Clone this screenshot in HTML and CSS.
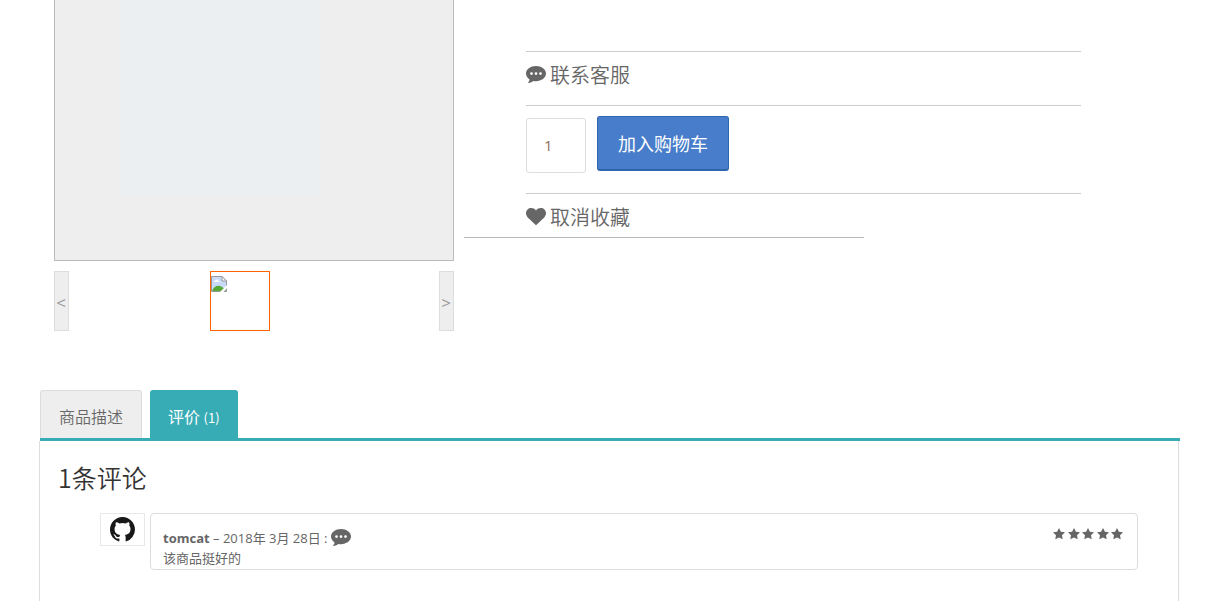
FILE: index.html
```html
<!DOCTYPE html>
<html lang="zh-CN">
<head>
<meta charset="utf-8">
<title>商品详情</title>
<link rel="stylesheet" href="styles.css">
</head>
<body>
<svg class="defs" width="0" height="0" aria-hidden="true">
  <symbol id="bubble" viewBox="0 0 20 18">
    <path fill-rule="evenodd" d="M10 0C4.500 0 0 3.300 0 7.600c0 2.500 1.400 4.500 3.600 5.900-.2 1.400-1 2.500-2 3.500 2.400-.2 4.300-.8 5.800-2.100.8.200 1.700.3 2.600.3 5.500 0 10-3.300 10-7.600S15.500 0 10 0zM5.500 6.200a1.400 1.400 0 1 1 0 2.800 1.400 1.400 0 0 1 0-2.800zm4.500 0a1.400 1.400 0 1 1 0 2.800 1.400 1.400 0 0 1 0-2.800zm4.500 0a1.400 1.400 0 1 1 0 2.800 1.400 1.400 0 0 1 0-2.800z"/>
  </symbol>
  <symbol id="star" viewBox="0 0 12 12">
    <path d="M6 0l1.900 3.700 4.100.6-3 2.900.7 4.100L6 9.400l-3.700 1.900.7-4.100L0 4.300l4.100-.6z"/>
  </symbol>
</svg>
<main class="page">
  <section class="product">
    <div class="gallery">
      <div class="preview"><div class="lens"></div></div>
      <div class="thumbs">
        <button class="arrow" type="button">&lt;</button>
        <div class="thumb">
          <svg width="16" height="16" viewBox="0 0 16 16" aria-hidden="true">
            <path d="M.5 15.500V.5h10.500l4.500 4.500v10.500z" fill="#c8daf7" stroke="#999"/>
            <path d="M11 .5V5h4.500z" fill="#fff" stroke="#999"/>
            <path d="M3 6c0-1.500 1.500-1.500 2-2 1-1 2 0 2 .7 1 0 1.500.5 1.500 1.300z" fill="#fff"/>
            <path d="M1 15c2-4 4-5.500 7-5.200 2 .2 5 2 7 5.200z" fill="#57a937"/>
            <path d="M8.500 16.500L16.500 8.500v3l-4.500 5z" fill="#fff"/>
          </svg>
        </div>
        <button class="arrow" type="button">&gt;</button>
      </div>
    </div>
    <div class="info">
      <a class="action contact" href="#contact"><svg class="icon" viewBox="0 0 20 18"><use href="#bubble"/></svg>联系客服</a>
      <form class="cart">
        <input class="qty" type="text" value="1" aria-label="数量">
        <button class="add" type="button">加入购物车</button>
      </form>
      <a class="action favorite" href="#favorite"><svg class="icon" viewBox="0 0 20 18"><path d="M10 17.300L1.700 9.400C-.7 6.900-.4 3.300 1.600 1.400 4-.7 7.700-.4 10 2.400c2.300-2.800 6-3.100 8.400-1 2 1.900 2.300 5.500-.1 8z"/></svg>取消收藏</a>
    </div>
    <div class="zoom-edge"></div>
  </section>

  <section class="details">
    <nav class="tabs">
      <a class="tab" href="#description">商品描述</a>
      <a class="tab active" href="#reviews">评价 <span class="count">(1)</span></a>
    </nav>
    <div class="panel" id="reviews">
      <h2 class="title">1条评论</h2>
      <article class="review">
        <div class="avatar">
          <svg width="25" height="25" viewBox="0 0 16 16" role="img" aria-label="tomcat"><path fill="#181818" d="M8 0C3.580 0 0 3.580 0 8c0 3.540 2.290 6.530 5.470 7.590.4.070.55-.17.55-.38 0-.19-.01-.82-.01-1.490-2.010.37-2.530-.49-2.690-.94-.09-.23-.48-.94-.82-1.130-.28-.15-.68-.52-.01-.53.63-.01 1.080.58 1.230.82.72 1.210 1.870.87 2.330.66.07-.52.28-.87.51-1.070-1.780-.2-3.640-.89-3.640-3.950 0-.87.31-1.590.82-2.150-.08-.2-.36-1.020.08-2.120 0 0 .67-.21 2.200.82a7.400 7.400 0 0 1 4 0c1.530-1.040 2.200-.82 2.200-.82.44 1.100.16 1.920.08 2.120.51.56.82 1.270.82 2.150 0 3.070-1.870 3.750-3.650 3.950.29.25.54.73.54 1.480 0 1.070-.01 1.930-.01 2.200 0 .21.15.46.55.38A8 8 0 0 0 16 8c0-4.420-3.580-8-8-8z"/></svg>
        </div>
        <div class="comment">
          <div class="body">
            <p class="meta"><span><strong>tomcat</strong> – 2018年 3月 28日 :</span><svg class="icon" viewBox="0 0 20 18"><use href="#bubble"/></svg></p>
            <p class="text">该商品挺好的</p>
          </div>
          <div class="stars" role="img" aria-label="5">
            <svg class="star"><use href="#star"/></svg>
            <svg class="star"><use href="#star"/></svg>
            <svg class="star"><use href="#star"/></svg>
            <svg class="star"><use href="#star"/></svg>
            <svg class="star"><use href="#star"/></svg>
          </div>
        </div>
      </article>
    </div>
  </section>
</main>
</body>
</html>
```
FILE: styles.css
```css
* { box-sizing: border-box; }

body {
  margin: 0;
  background: #fff;
  color: #666;
  font: 13px/20px "Open Sans", "Noto Sans CJK SC", sans-serif;
}

a { color: inherit; text-decoration: none; }
p, h2 { margin: 0; }
.defs { position: absolute; }
.icon { width: 20px; height: 18px; fill: #666; }

.page { padding: 0 50px 0 40px; }

.product {
  position: relative;
  display: flex;
  gap: 72px;
  padding: 0 99px 0 14px;
}

.gallery { flex: 0 0 400px; }
.preview {
  height: 261px;
  padding-left: 66px;
  background: #eee;
  border: 1px solid #bbb;
  border-top: 0;
}
.lens { width: 200px; height: 197px; background: #ebeff2; }

.thumbs {
  display: flex;
  justify-content: space-between;
  margin-top: 10px;
}
.arrow {
  width: 15px;
  height: 60px;
  padding: 3px 1px 0 0;
  background: #eee;
  border: 1px solid #ddd;
  color: #999;
  font: 17px/20px "Open Sans", sans-serif;
  display: flex;
  align-items: center;
  justify-content: center;
}
.thumb {
  width: 60px;
  height: 60px;
  margin-right: 28px;
  padding-top: 4px;
  border: 1px solid #f60;
}
.thumb svg { display: block; }

.info { flex: 1; padding-top: 51px; }
.action {
  display: flex;
  align-items: center;
  gap: 4px;
  border-top: 1px solid #ccc;
  font-family: "Noto Sans CJK SC", sans-serif;
  font-size: 20px;
  font-weight: 350;
  line-height: 46px;
}
.contact { padding-bottom: 7px; }
.cart {
  display: flex;
  gap: 11px;
  height: 88px;
  padding-top: 10px;
  border-top: 1px solid #ccc;
}
.qty {
  width: 60px;
  height: 55px;
  margin-top: 2px;
  padding: 0 17px 2px;
  border: 1px solid #ddd;
  border-radius: 3px;
  color: #8f6f60;
  font: 15px/20px "Open Sans", sans-serif;
}
.add {
  height: 55px;
  padding: 0 20px;
  background: #477dca;
  border: 1px solid #2f65ad;
  border-bottom-width: 2px;
  border-radius: 3px;
  color: #fff;
  font: 18px/24px "Noto Sans CJK SC", sans-serif;
}
.zoom-edge {
  position: absolute;
  left: 424px;
  top: 237px;
  width: 400px;
  height: 1px;
  background: #bbb;
}

.details { margin-top: 59px; }
.tabs {
  display: flex;
  gap: 8px;
  border-bottom: 3px solid #38acb5;
}
.tab {
  height: 48px;
  padding: 4px 18px 0;
  background: #eee;
  border: 1px solid #ddd;
  border-bottom: 0;
  border-radius: 3px 3px 0 0;
  font: 350 16px/42px "Noto Sans CJK SC", sans-serif;
}
.tab.active { padding: 4px 17px 0; background: #38acb5; border-color: #38acb5; color: #fff; font-weight: 400; }
.count { font-size: 13px; }

.panel {
  min-height: 160px;
  margin: 0 1px 0 -1px;
  padding: 18px 40px 31px 18px;
  border: 1px solid #ddd;
  border-width: 0 1px;
}
.title {
  color: #333;
  font: 350 25px/36px "Noto Sans CJK SC", sans-serif;
}
.review {
  display: flex;
  align-items: flex-start;
  gap: 5px;
  margin: 18px 0 0 42px;
}
.avatar {
  display: flex;
  align-items: center;
  justify-content: center;
  width: 45px;
  height: 33px;
  border: 1px solid #e8e8e8;
}
.comment {
  flex: 1;
  display: flex;
  justify-content: space-between;
  height: 57px;
  padding: 14px 14px 0 12px;
  border: 1px solid #ddd;
  border-radius: 4px;
}
.meta { display: flex; align-items: center; gap: 4px; }
.meta strong { font-weight: 700; }
.stars { display: flex; justify-content: space-between; width: 70px; }
.star { width: 12px; height: 12px; fill: #666; }
```
